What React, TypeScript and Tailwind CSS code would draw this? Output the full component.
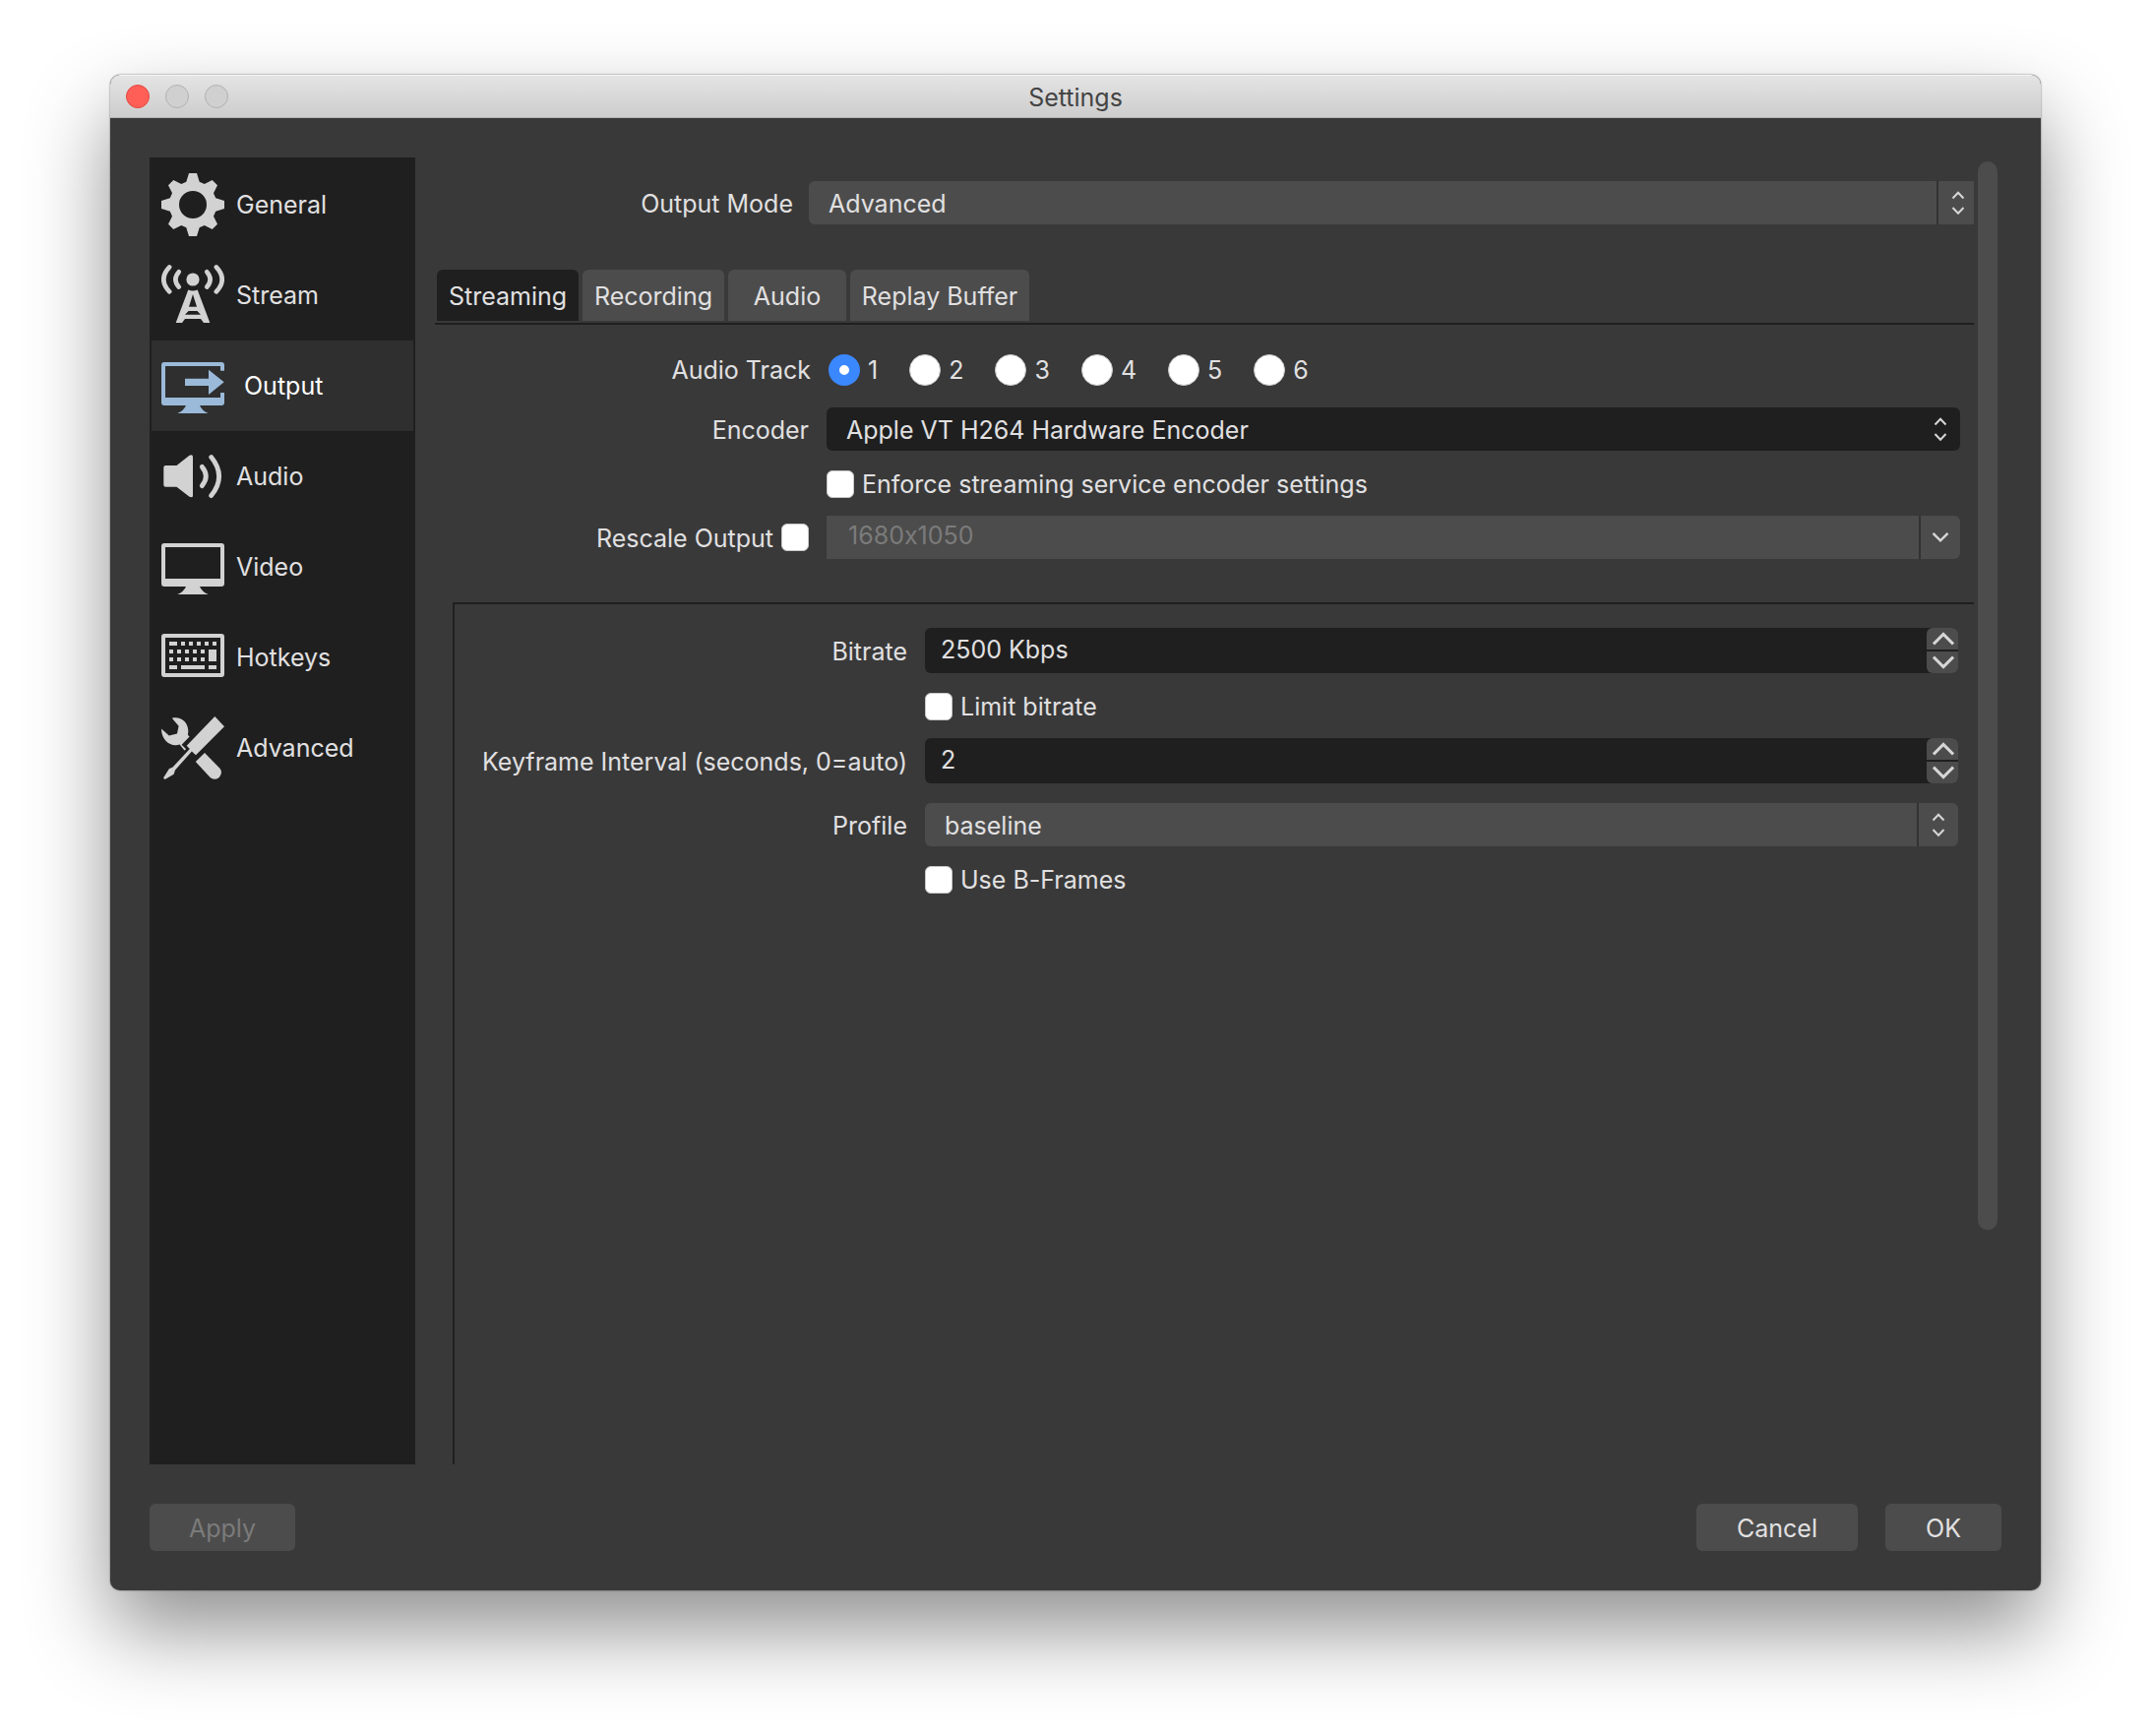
import { useState } from "react";
import type { ReactNode } from "react";
import clsx from "clsx";

function GearIcon() {
  return (
    <svg viewBox="0 0 64 64" className="size-16" fill="currentColor" aria-hidden="true">
      <path
        fillRule="evenodd"
        d="M28 0H36L38.7 8.8L43.7 11L51.7 7L57 12.3L53 20.3L55.2 25.3L64 28V36L55.2 38.7L53 43.7L57 51.7L51.7 57L43.7 53L38.7 55.2L36 64H28L25.3 55.2L20.3 53L12.3 57L7 51.7L11 43.7L8.8 38.7L0 36V28L8.8 25.3L11 20.3L7 12.3L12.3 7L20.3 11L25.3 8.8ZM32 18a14 14 0 1 0 0 28a14 14 0 1 0 0-28Z"
      />
    </svg>
  );
}

function AntennaIcon() {
  return (
    <svg viewBox="0 0 64 64" className="size-16" fill="currentColor" aria-hidden="true">
      <circle cx="32" cy="16" r="6.6" />
      <g fill="none" stroke="currentColor" strokeWidth="4.6" strokeLinecap="round">
        <path d="M17.8 8.2Q11 16 17.8 23.6" />
        <path d="M46.2 8.2Q53 16 46.2 23.6" />
        <path d="M8.2 3.4Q-3.6 16 8.2 28.4" />
        <path d="M55.8 3.4Q67.6 16 55.8 28.4" />
      </g>
      <path
        fillRule="evenodd"
        d="M27.3 26.6Q32 28.6 36.7 26.6L49.3 60H43L40 56H24L21 60H14.7ZM32 31L28 43.7H36ZM27.6 48L24 51.7H40L36.4 48Z"
      />
    </svg>
  );
}

function OutputIcon() {
  return (
    <svg viewBox="0 0 64 64" className="size-16" fill="currentColor" aria-hidden="true">
      <path d="M3 8H61A3 3 0 0 1 64 11V16.7H60V12H4V44H60V39H64V49A3 3 0 0 1 61 52H39Q41 57 47.7 60H16.3Q23 57 25 52H3A3 3 0 0 1 0 49V11A3 3 0 0 1 3 8Z" />
      <path d="M24 24.7H48V15.7L63.7 28.3L48 41V32H24Z" />
    </svg>
  );
}

function SpeakerIcon() {
  return (
    <svg viewBox="0 0 64 64" className="size-16" fill="currentColor" aria-hidden="true">
      <path d="M4.3 21H15.5L28.5 10.8Q32 9.4 32 12.4V51.4Q32 54.2 28.5 52.8L15.5 42.7H4.3Q2.3 42.7 2.3 40.7V23Q2.3 21 4.3 21Z" />
      <g fill="none" stroke="currentColor" strokeWidth="4.8" strokeLinecap="round">
        <path d="M41.3 22.4Q49.3 32 41.3 41.6" />
        <path d="M50.7 12.6Q66.5 32 50.7 51.6" />
      </g>
    </svg>
  );
}

function MonitorIcon() {
  return (
    <svg viewBox="0 0 64 64" className="size-16" fill="currentColor" aria-hidden="true">
      <path
        fillRule="evenodd"
        d="M3 8H61A3 3 0 0 1 64 11V49A3 3 0 0 1 61 52H39Q41 57 47.7 60H16.3Q23 57 25 52H3A3 3 0 0 1 0 49V11A3 3 0 0 1 3 8ZM4 12V44H60V12Z"
      />
    </svg>
  );
}

function KeyboardIcon() {
  return (
    <svg viewBox="0 0 64 64" className="size-16" fill="currentColor" aria-hidden="true">
      <path
        fillRule="evenodd"
        d="M3 8H61A3 3 0 0 1 64 11V49A3 3 0 0 1 61 52H3A3 3 0 0 1 0 49V11A3 3 0 0 1 3 8ZM4 12V48H60V12Z"
      />
      <path d="M8 16h8v4h-8zM20 16h4v4h-4zM28 16h4v4h-4zM36 16h4v4h-4zM44 16h4v4h-4zM52 16h4v4h-4z" />
      <path d="M8 24h4v4h-4zM16 24h4v4h-4zM24 24h4v4h-4zM32 24h4v4h-4zM40 24h4v4h-4zM48 24h8v12h-8z" />
      <path d="M8 32h4v4h-4zM16 32h4v4h-4zM24 32h4v4h-4zM32 32h4v4h-4zM40 32h4v4h-4z" />
      <path d="M8 40h8v4h-8zM20 40h24v4h-24zM48 40h8v4h-8z" />
    </svg>
  );
}

function ToolsIcon() {
  return (
    <svg viewBox="0 0 64 64" className="size-16" fill="currentColor" aria-hidden="true">
      <path d="M54.3 0L64 10.3L35 39.3L30.9 35.6L14 54.6L12.6 58.8L3.6 64L2 62.4L7.8 53.2L11.6 51.4L28.8 33L25.7 29.7Z" />
      <path d="M10.8 1.8C19.5 -0.5 27.6 6 27.3 15.5L26.9 18.8L28.6 20.5L20.6 28.8L25.2 33.2L23.4 34.4L18.6 28.6C10 31.5 0 25 0 12.6L7.8 19.4L16 17.4L17.6 9.8Z" />
      <path d="M44 37L59.2 52.4A6.8 6.8 0 0 1 49.6 62L34.8 46Z" />
    </svg>
  );
}

function UpDownArrows() {
  return (
    <svg viewBox="0 0 14 26" className="h-[26px] w-3.5" fill="none" stroke="#d6d6d6" strokeWidth="2" aria-hidden="true">
      <path d="M1.5 8.5L7 2.8L12.5 8.5" />
      <path d="M1.5 18L7 23.7L12.5 18" />
    </svg>
  );
}

interface SelectProps {
  id: string;
  options: string[];
  dark?: boolean;
  square?: boolean;
}

function Select({ id, options, dark, square }: SelectProps) {
  return (
    <div className="relative flex-1">
      <select
        id={id}
        defaultValue={options[0]}
        className={clsx(
          "block h-11 w-full appearance-none rounded-l-md pt-0.5 pr-14 pl-5 text-[#e1e0e1]",
          dark ? "bg-[#1f1f1f]" : "bg-[#4c4c4c]",
          !square && "rounded-r-md",
        )}
      >
        {options.map((option) => (
          <option key={option}>{option}</option>
        ))}
      </select>
      <div
        className={clsx(
          "pointer-events-none absolute inset-y-0 right-0 flex items-center",
          dark ? "w-10 justify-center" : "border-l-2 border-[#323232]",
          square && "w-[38px] justify-end pr-[9px]",
          !dark && !square && "w-[42px] justify-center",
        )}
      >
        <UpDownArrows />
      </div>
    </div>
  );
}

function SpinBox({ id, initial }: { id: string; initial: string }) {
  const [value, setValue] = useState(initial);

  const step = (delta: number) => {
    const number = parseInt(value, 10) || 0;
    setValue(value.replace(/^\d+/, String(Math.max(0, number + delta))));
  };

  return (
    <div className="flex h-[46px] flex-1 rounded-md bg-[#1f1f1f]">
      <input
        id={id}
        type="text"
        value={value}
        onChange={(e) => setValue(e.target.value)}
        className="min-w-0 flex-1 bg-transparent pb-0.5 pl-4 text-[#e1e0e1] outline-none"
      />
      <div className="flex w-8 flex-col gap-0.5">
        <button
          type="button"
          aria-label="Increase"
          onClick={() => step(1)}
          className="flex h-[22px] items-center justify-center rounded-t-md bg-[#4c4c4c] pl-0.5"
        >
          <svg viewBox="0 0 22 14" className="h-3.5 w-[22px]" fill="none" stroke="#d6d6d6" strokeWidth="3">
            <path d="M1 12.4L11 2.4L21 12.4" />
          </svg>
        </button>
        <button
          type="button"
          aria-label="Decrease"
          onClick={() => step(-1)}
          className="flex h-[22px] items-center justify-center rounded-b-md bg-[#4c4c4c] pl-0.5"
        >
          <svg viewBox="0 0 22 14" className="h-3.5 w-[22px]" fill="none" stroke="#d6d6d6" strokeWidth="3">
            <path d="M1 1.6L11 11.6L21 1.6" />
          </svg>
        </button>
      </div>
    </div>
  );
}

const checkboxClass =
  "size-7 shrink-0 appearance-none rounded-md border border-[#c9c7c7] bg-white checked:bg-[#3b87fd]";

function Checkbox({ label }: { label: string }) {
  return (
    <label className="flex items-center gap-2">
      <input type="checkbox" className={checkboxClass} />
      {label}
    </label>
  );
}

interface RowProps {
  label?: string;
  htmlFor?: string;
  labelClass: string;
  className: string;
  children: ReactNode;
}

function Row({ label, htmlFor, labelClass, className, children }: RowProps) {
  return (
    <div className={clsx("flex items-center", className)}>
      <div className={clsx("shrink-0 text-right", htmlFor && "pt-0.5", labelClass)}>
        {label && <label htmlFor={htmlFor}>{label}</label>}
      </div>
      {children}
    </div>
  );
}

const pages = [
  { name: "General", icon: <GearIcon /> },
  { name: "Stream", icon: <AntennaIcon /> },
  { name: "Output", icon: <OutputIcon /> },
  { name: "Audio", icon: <SpeakerIcon /> },
  { name: "Video", icon: <MonitorIcon /> },
  { name: "Hotkeys", icon: <KeyboardIcon /> },
  { name: "Advanced", icon: <ToolsIcon /> },
];

const tabs = [
  { name: "Streaming", width: "w-36" },
  { name: "Recording", width: "w-36" },
  { name: "Audio", width: "w-30" },
  { name: "Replay Buffer", width: "w-[182px]" },
];

const tracks = [1, 2, 3, 4, 5, 6];

export default function App() {
  const [page, setPage] = useState("Output");
  const [tab, setTab] = useState("Streaming");
  const [track, setTrack] = useState(1);

  return (
    <div className="flex min-h-screen flex-col bg-white px-28 pt-[76px] pb-[148px] font-['Inter',sans-serif] text-[25px] leading-8 text-[#e1e0e1] [font-feature-settings:'calt'_0]">
      <div className="flex flex-1 flex-col overflow-hidden rounded-[10px] bg-[#393939] shadow-[0_0_2px_rgba(0,0,0,0.6),0_40px_84px_rgba(0,0,0,0.44)]">
        <header className="grid h-11 grid-cols-[1fr_auto_1fr] items-center border-t border-b border-t-[#f4f4f4] border-b-[#b4b4b4] bg-linear-to-b from-[#e4e4e4] to-[#cdcdcd] px-4 text-[#444444]">
          <div className="flex gap-4">
            <button type="button" aria-label="Close" className="size-6 rounded-full border border-[#e2463f] bg-[#ff5f57]" />
            <button type="button" aria-label="Minimize" className="size-6 rounded-full border border-[#b1b1b1] bg-[#d0d0d0]" />
            <button type="button" aria-label="Zoom" className="size-6 rounded-full border border-[#b1b1b1] bg-[#d0d0d0]" />
          </div>
          <h1 className="pt-0.5">Settings</h1>
        </header>

        <div className="flex flex-1 flex-col gap-10 p-10">
          <div className="flex flex-1">
            <nav className="w-[270px] shrink-0 bg-[#1f1f1f] p-0.5">
              {pages.map(({ name, icon }) => (
                <button
                  key={name}
                  type="button"
                  onClick={() => setPage(name)}
                  className={clsx(
                    "flex h-[92px] w-full items-center pl-2.5",
                    page === name ? "gap-5 bg-[#2f2f2f] text-white" : "gap-3",
                  )}
                >
                  <span className={page === name ? "text-[#9bbad9]" : "text-[#d2d2d2]"}>{icon}</span>
                  {name}
                </button>
              ))}
            </nav>

            <main className="ml-5 flex min-w-0 flex-1 flex-col pt-6">
              <Row label="Output Mode" htmlFor="mode" labelClass="w-[364px] mr-4" className="mb-[46px]">
                <Select id="mode" options={["Advanced", "Simple"]} square />
              </Row>

              <div role="tablist" className="flex gap-1 border-b-2 border-[#1f1f1f] pb-0.5 pl-0.5">
                {tabs.map(({ name, width }) => (
                  <button
                    key={name}
                    type="button"
                    role="tab"
                    aria-selected={tab === name}
                    onClick={() => setTab(name)}
                    className={clsx(
                      "h-[52px] rounded-t-md pt-0.5 whitespace-nowrap",
                      width,
                      tab === name ? "bg-[#1f1f1f]" : "bg-[#4c4c4c]",
                    )}
                  >
                    {name}
                  </button>
                ))}
              </div>

              <div className="flex flex-col pt-[30px] pr-3.5">
                <Row label="Audio Track" labelClass="w-[382px] mr-[18px]" className="mb-[22px]">
                  <div className="flex gap-8">
                    {tracks.map((n) => (
                      <label key={n} className="flex items-center gap-2">
                        <input
                          type="radio"
                          name="track"
                          checked={track === n}
                          onChange={() => setTrack(n)}
                          className="size-8 appearance-none rounded-full border border-[#c9c7c7] bg-white checked:border-[11px] checked:border-[#3b87fd]"
                        />
                        {n}
                      </label>
                    ))}
                  </div>
                </Row>
                <Row label="Encoder" htmlFor="encoder" labelClass="w-[380px] mr-[18px]" className="mb-[18px]">
                  <Select id="encoder" options={["Apple VT H264 Hardware Encoder", "x264"]} dark />
                </Row>
                <Row labelClass="w-[380px] mr-[18px]" className="mb-4">
                  <Checkbox label="Enforce streaming service encoder settings" />
                </Row>
                <div className="flex items-center">
                  <label className="mr-[18px] flex w-[380px] shrink-0 items-center justify-end gap-2">
                    <span className="pt-0.5">Rescale Output</span>
                    <input type="checkbox" className={checkboxClass} />
                  </label>
                  <div className="flex h-11 flex-1 gap-0.5 rounded-r-md bg-[#323232]">
                    <input
                      type="text"
                      aria-label="Rescale resolution"
                      defaultValue="1680x1050"
                      disabled
                      className="min-w-0 flex-1 bg-[#4c4c4c] pb-1 pl-[22px] text-[#7b7b7b]"
                    />
                    <button
                      type="button"
                      aria-label="Choose resolution"
                      disabled
                      className="flex w-10 items-center justify-center rounded-r-md bg-[#4c4c4c]"
                    >
                      <svg viewBox="0 0 18 12" className="h-3 w-[18px]" fill="none" stroke="#d6d6d6" strokeWidth="2.4">
                        <path d="M1.5 1.8L9 9.3L16.5 1.8" />
                      </svg>
                    </button>
                  </div>
                </div>
              </div>

              <section className="mt-11 ml-[18px] flex flex-1 flex-col border-t-2 border-l-2 border-[#1f1f1f] pt-6 pr-4">
                <Row label="Bitrate" htmlFor="bitrate" labelClass="w-[460px] mr-[18px]" className="mb-[18px]">
                  <SpinBox id="bitrate" initial="2500 Kbps" />
                </Row>
                <Row labelClass="w-[460px] mr-[18px]" className="mb-4">
                  <Checkbox label="Limit bitrate" />
                </Row>
                <Row
                  label="Keyframe Interval (seconds, 0=auto)"
                  htmlFor="keyframe"
                  labelClass="w-[460px] mr-[18px]"
                  className="mb-5"
                >
                  <SpinBox id="keyframe" initial="2" />
                </Row>
                <Row label="Profile" htmlFor="profile" labelClass="w-[460px] mr-[18px]" className="mb-[18px]">
                  <Select id="profile" options={["baseline", "main", "high"]} />
                </Row>
                <Row labelClass="w-[460px] mr-[18px]" className="mb-4">
                  <Checkbox label="Use B-Frames" />
                </Row>
              </section>
            </main>

            <div className="mr-1 ml-1 w-5 shrink-0 pt-1">
              <div className="h-[82%] rounded-full bg-[#4c4c4c]" />
            </div>
          </div>

          <footer className="flex items-center gap-7">
            <button type="button" disabled className="mr-auto h-12 w-[148px] rounded-md bg-[#4c4c4c] pt-0.5 text-[#7b7b7b]">
              Apply
            </button>
            <button type="button" className="h-12 w-[164px] rounded-md bg-[#4c4c4c] pt-0.5">
              Cancel
            </button>
            <button type="button" className="h-12 w-[118px] rounded-md bg-[#4c4c4c] pt-0.5">
              OK
            </button>
          </footer>
        </div>
      </div>
    </div>
  );
}
